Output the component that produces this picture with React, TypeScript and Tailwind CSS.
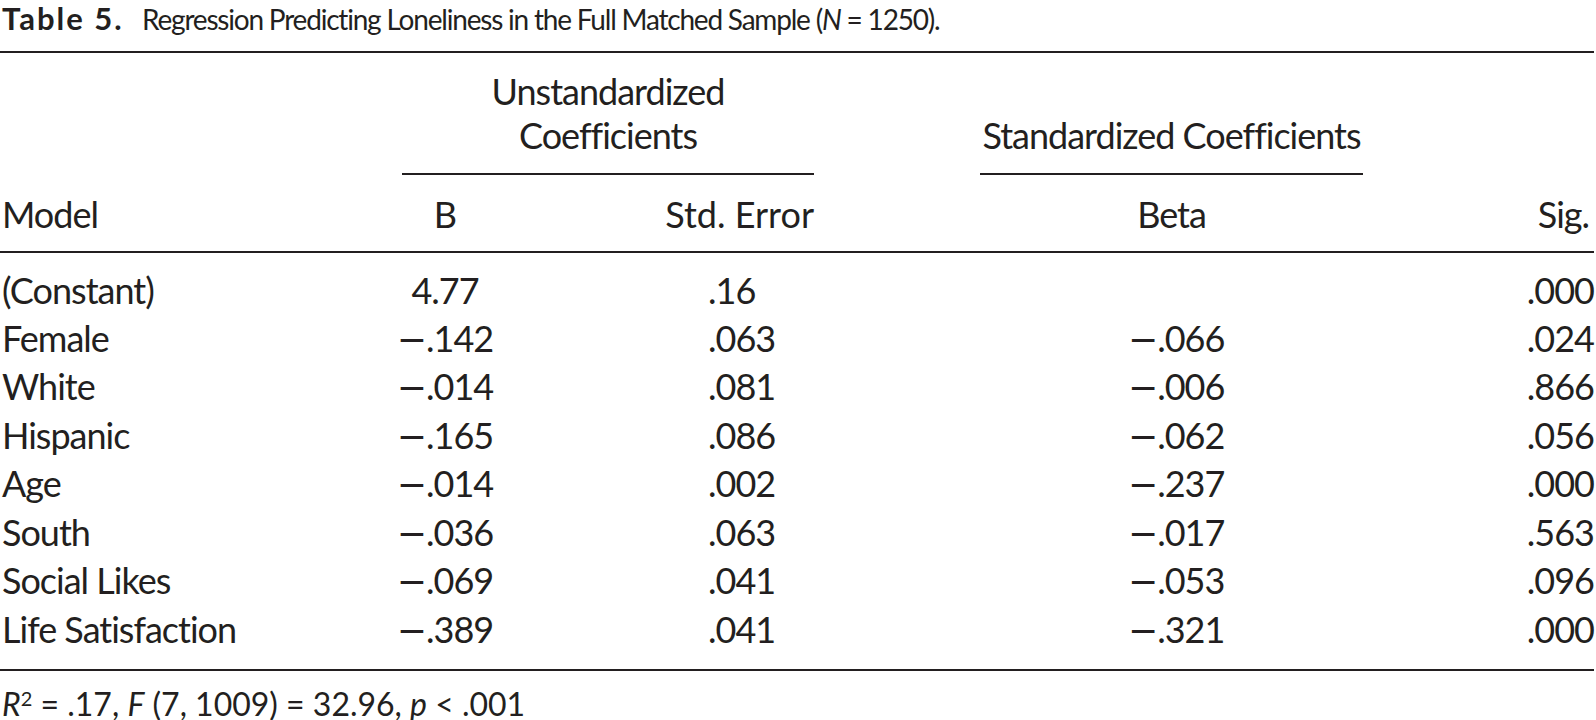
const rows = [
  { label: '(Constant)', b: '4.77', se: '.16', beta: '', sig: '.000' },
  { label: 'Female', b: '−.142', se: '.063', beta: '−.066', sig: '.024' },
  { label: 'White', b: '−.014', se: '.081', beta: '−.006', sig: '.866' },
  { label: 'Hispanic', b: '−.165', se: '.086', beta: '−.062', sig: '.056' },
  { label: 'Age', b: '−.014', se: '.002', beta: '−.237', sig: '.000' },
  { label: 'South', b: '−.036', se: '.063', beta: '−.017', sig: '.563' },
  { label: 'Social Likes', b: '−.069', se: '.041', beta: '−.053', sig: '.096' },
  { label: 'Life Satisfaction', b: '−.389', se: '.041', beta: '−.321', sig: '.000' },
];

const Rule = ({ className = '' }: { className?: string }) => (
  <div className={`h-[2px] bg-[#231f20] ${className}`} />
);

// the long typographic minus, in a face that draws it wide
const Num = ({ v }: { v: string }) =>
  v.startsWith('−') ? (
    <>
      <span className="font-['DejaVu_Sans',sans-serif]">−</span>
      {v.slice(1)}
    </>
  ) : (
    <>{v}</>
  );

export default function App() {
  return (
    <div className="w-[1596px] h-[720px] bg-white text-[#231f20] font-['Lato','Liberation_Sans',sans-serif] text-[36px] tracking-[-1px] overflow-hidden">
      <div className="w-[1594px]">
        {/* Caption */}
        <div className="h-10 pl-[2px] whitespace-nowrap flex items-baseline">
          <span className="font-bold text-[31px] tracking-[2px] leading-[37px] w-[140px] shrink-0">Table 5.</span>
          <span className="text-[28px] tracking-[-1.2px] leading-[34px]">
            Regression Predicting Loneliness in the Full Matched Sample (<i>N</i> = 1250).
          </span>
        </div>

        <Rule className="mt-[11px]" />

        {/* Spanning headers */}
        <div className="flex pt-[17px] leading-[43.5px]">
          <div className="w-[402px] shrink-0" />
          <div className="w-[412px] shrink-0 flex flex-col">
            <div className="text-center">Unstandardized</div>
            <div className="text-center">Coefficients</div>
            <Rule className="mt-[16px]" />
          </div>
          <div className="w-[166px] shrink-0" />
          <div className="w-[383px] shrink-0 flex flex-col justify-end">
            <div className="text-center">Standardized Coefficients</div>
            <Rule className="mt-[16px]" />
          </div>
        </div>

        {/* Column headers */}
        <div className="flex mt-[19px] leading-10">
          <div className="w-[376px] shrink-0 pl-[2px]">Model</div>
          <div className="w-[138px] shrink-0 text-center">B</div>
          <div className="w-[300px] shrink-0 text-right tracking-normal">Std. Error</div>
          <div className="w-[166px] shrink-0" />
          <div className="w-[383px] shrink-0 text-center">Beta</div>
          <div className="flex-1 text-right pr-[5px]">Sig.</div>
        </div>

        <Rule className="mt-[17px]" />

        {/* Body */}
        <div className="pt-[14px] leading-[47.5px]">
          {rows.map((r) => (
            <div key={r.label} className="flex">
              <div className="w-[376px] shrink-0 pl-[2px]">{r.label}</div>
              <div className="w-[138px] shrink-0 text-center">
                <Num v={r.b} />
              </div>
              <div className="w-[300px] shrink-0 pl-[194px]">{r.se}</div>
              <div className="w-[549px] shrink-0 pl-[314px]">
                <Num v={r.beta} />
              </div>
              <div className="flex-1 text-right">{r.sig}</div>
            </div>
          ))}
        </div>

        <Rule className="mt-[15px]" />

        {/* Note */}
        <div className="mt-[14px] leading-[38px] pl-[2px] whitespace-nowrap text-[32px] tracking-normal">
          <i>R</i>
          <sup className="text-[20px] leading-none">2</sup> = .17, <i>F</i> (7, 1009) = 32.96, <i>p</i> &lt; .001
        </div>
      </div>
    </div>
  );
}
